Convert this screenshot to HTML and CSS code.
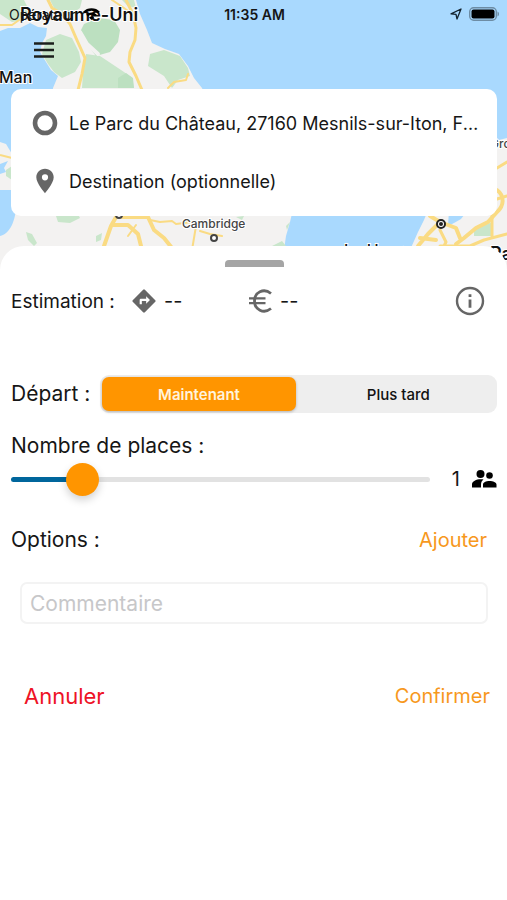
FILE: index.html
```html
<!DOCTYPE html>
<html lang="fr">
<head>
<meta charset="utf-8">
<meta name="viewport" content="width=device-width, initial-scale=1">
<title>Réservation</title>
<link rel="stylesheet" href="styles.css">
</head>
<body>
<div class="app">
  <svg class="map" viewBox="0 0 507 280" preserveAspectRatio="xMidYMin slice" aria-hidden="true">
    <rect width="507" height="280" fill="#a9d9fe"/>
    <path fill="#f3f2f1" d="M0 0H136L140 14 147 30 152 43 165 49 179 54 188 66 194 78 202 88 210 110 200 220H140L52 120 53 88 58 76 51 70 46 62 40 52 42 43 46 36 47 28 38 27 30 23 20 28 8 28 0 31Z"/>
    <path fill="#c9e6cb" d="M0 0H24L30 12 24 20 12 22 0 14ZM50 0H82L80 8 66 18 56 12ZM46 40 60 34 72 38 79 52 81 62 75 72 62 78 54 72 48 64 42 54ZM86 54 100 56 112 64 124 72 132 78 134 88H82L83 72ZM150 54 164 50 180 56 188 68 190 76 178 80 172 88 164 76 148 66ZM122 0H134L136 8 128 6Z"/>
    <path fill="#bce0c0" d="M84 24 98 18 114 20 120 30 118 42 110 52 96 56 88 46 80 32ZM118 78 126 73 133 78 134 88H118Z"/>
    <path fill="none" stroke="#f3f2f1" stroke-width="4" stroke-linecap="round" d="M80 32 87 44 98 54"/>
    <g fill="none" stroke="#fadb83" stroke-linecap="round" stroke-linejoin="round">
      <path stroke-width="3" d="M48 0 52 8 62 14 70 24 76 38 85 58 82 74 78 90M126 0 133 14 136 28 135 40 130 52 129 62 136 76 142 90"/>
      <path stroke-width="2" d="M112 0 124 8 132 14M0 25 12 25 22 18M188 74 186 80 174 82 168 88"/>
    </g>
    <path fill="#f3f2f1" d="M0 142 6 144 12 154V190H0Z"/>
    <path fill="#a9d9fe" d="M0 164 8 161 4 168 6 172 0 174Z"/>
    <path fill="#c9e6cb" d="M6 170 12 166V180L6 176Z"/>
    <path stroke="#fadb83" stroke-width="2" fill="none" d="M0 155 12 158"/>
    <path fill="#f3f2f1" d="M0 236C10 234 16 220 16 205H294L290 222 286 236 284 250 280 280H0Z"/>
    <path fill="#c9e6cb" d="M56 216 78 214 80 218 70 223 58 222ZM26 232 32 234 37 243 34 246 28 240ZM96 236 102 233 101 240 96 242ZM272 246 282 241 286 246ZM236 217 244 216 242 220ZM286 226 290 222 287 230Z"/>
    <g fill="none" stroke="#fadb83" stroke-linecap="round" stroke-linejoin="round">
      <path stroke-width="4" d="M120 210 111 226 104 246 100 260M112 225H128L138 234 142 250M122 217 148 217 154 230 164 238 172 248"/>
      <path stroke-width="2" d="M136 225 128 236M150 220 160 222 172 221 176 224 192 222M196 226 194 238 192 250M200 231 210 234 222 236"/>
    </g>
    <path fill="#f3f2f1" d="M507 138 499 140 492 146V205H430L424 220 418 232 410 250V280H507Z"/>
    <path fill="#a9d9fe" d="M449 210H468L461 219 454 223 448 226Z"/>
    <path fill="#c9e6cb" d="M474 230 492 222V236H474Z"/>
    <g fill="none" stroke="#fadb83" stroke-linecap="round" stroke-linejoin="round">
      <path stroke-width="4" d="M497 190C505 196 504 206 497 212L488 222 476 228 464 238 456 244M430 216 440 222 456 228 460 238M418 246 428 234 438 224M420 238 436 240"/>
      <path stroke-width="3" d="M497 168 507 162M440 230 446 242 442 250M497 199 507 196M440 246H470L484 240 507 234M492 216V236"/>
    </g>
    <g fill="#fff" stroke="#444" stroke-width="2">
      <circle cx="119" cy="215" r="3"/>
      <circle cx="214" cy="238" r="3"/>
      <circle cx="441" cy="224" r="4" stroke="#222"/>
    </g>
    <circle cx="441" cy="224" r="2" fill="#222"/>
    <g class="map-labels">
      <text class="country" x="20" y="21">Royaume-Uni</text>
      <text class="region" x="-1" y="83">Man</text>
      <text class="town" x="182" y="228">Cambridge</text>
      <text class="town" x="490" y="148">Gro</text>
      <text class="region" x="344" y="256">Le Havre</text>
      <text class="country" x="490" y="260">Paris</text>
    </g>
  </svg>

  <header class="top">
    <div class="status">
      <div class="carrier">
        <span>Opérateur</span>
        <svg width="17" height="13" viewBox="0 0 17 13" fill="none" stroke="#000" stroke-width="2.400" aria-hidden="true"><path d="M1 4.500C5 .5 12 .5 16 4.500M4 7.500C6.500 5 10.500 5 13 7.500"/><path d="M6 9.500 8.500 12 11 9.500C9.500 8 7.500 8 6 9.500Z" fill="#000" stroke="none"/></svg>
      </div>
      <time class="clock">11:35 AM</time>
      <div class="indicators">
        <svg width="12" height="12" viewBox="0 0 12 12" fill="none" stroke="#12222e" stroke-width="1.300" stroke-linejoin="round" aria-hidden="true"><path d="M1 5.800 11 1 7 11 6 6.300Z"/></svg>
        <svg width="31" height="14" viewBox="0 0 31 14" aria-hidden="true"><rect x=".7" y=".7" width="26.600" height="12.600" rx="4" fill="none" stroke="#6d8ca4" stroke-width="1.400"/><rect x="2.500" y="2.500" width="23" height="9" rx="2" fill="#000"/><path d="M28.500 4.500c2 .8 2 4.200 0 5Z" fill="#6d8ca4"/></svg>
      </div>
    </div>
    <button class="menu" type="button" aria-label="Menu">
      <svg width="20" height="16" viewBox="0 0 20 16" stroke="#1b1f1c" stroke-width="2.400" aria-hidden="true"><path d="M0 1.500H20M0 8H20M0 14.500H20"/></svg>
    </button>
  </header>

  <section class="trip">
    <button class="place" type="button">
      <svg width="26" height="26" viewBox="0 0 26 26" aria-hidden="true"><circle cx="13" cy="13" r="10" fill="none" stroke="#666" stroke-width="4.600"/></svg>
      <span>Le Parc du Château, 27160 Mesnils-sur-Iton, France</span>
    </button>
    <button class="place" type="button">
      <svg width="26" height="26" viewBox="0 0 26 26" aria-hidden="true"><path fill="#666" fill-rule="evenodd" d="M13 .8C8 .8 4.300 4.600 4.300 9.300 4.300 15.500 13 25.200 13 25.200S21.700 15.500 21.700 9.300C21.700 4.600 18 .8 13 .8ZM13 6.200a3.100 3.100 0 1 1 0 6.200 3.100 3.100 0 0 1 0-6.200Z"/></svg>
      <span>Destination (optionnelle)</span>
    </button>
  </section>

  <main class="sheet">
    <div class="handle"></div>
    <section class="estimate">
      <h2>Estimation :</h2>
      <div class="figure distance">
        <svg width="26" height="26" viewBox="0 0 24 24" aria-hidden="true"><path fill="#666" d="M22.400 11.200 12.800 1.600a1.100 1.100 0 0 0-1.600 0L1.600 11.200a1.100 1.100 0 0 0 0 1.600l9.600 9.600a1.100 1.100 0 0 0 1.600 0l9.600-9.600a1.100 1.100 0 0 0 0-1.600ZM14 14.500V12h-4v3H8v-4a1 1 0 0 1 1-1h5V7.500l3.500 3.500Z"/></svg>
        <span>--</span>
      </div>
      <div class="figure">
        <svg width="26" height="26" viewBox="0 0 26 26" fill="none" stroke="#666" stroke-width="2.800" aria-hidden="true"><path d="M24 5.500C16.500-.5 7.500 4.500 7.500 13S16.500 26.500 24 20.500"/><path stroke-width="2.200" d="M2 10.300H18.500M2 15.200H18.500"/></svg>
        <span>--</span>
      </div>
      <button class="info" type="button" aria-label="Informations">
        <svg width="30" height="30" viewBox="0 0 30 30" aria-hidden="true"><circle cx="15" cy="15" r="13" fill="none" stroke="#666" stroke-width="2.400"/><path fill="#666" d="M13.600 13.500h2.800v8.200h-2.800zM13.600 8.300h2.800v2.800h-2.800z"/></svg>
      </button>
    </section>

    <div class="departure" role="radiogroup" aria-labelledby="depart">
      <span class="label" id="depart">Départ :</span>
      <div class="segments">
        <label><input type="radio" name="depart" checked><span>Maintenant</span></label>
        <label><input type="radio" name="depart"><span>Plus tard</span></label>
      </div>
    </div>

    <section class="seats">
      <label class="label" for="places">Nombre de places :</label>
      <div class="seat-row">
        <input id="places" type="range" min="0" max="7" value="1">
        <output for="places">1</output>
        <svg width="26" height="26" viewBox="0 0 26 26" aria-hidden="true"><circle cx="9.500" cy="8" r="4"/><circle cx="18.500" cy="9.500" r="3.300"/><path d="M12.500 13.400C7 12.400 1 14.600 1 18.300V21.500H10V18.500C10 16 11 14.500 12.500 13.400ZM18.500 15C15 15 12 16.400 12 18.600V21.500H25.500V18.600C25.500 16.400 22 15 18.500 15Z"/></svg>
      </div>
    </section>

    <section class="options">
      <span class="label">Options :</span>
      <button class="link" type="button">Ajouter</button>
    </section>

    <input class="comment" type="text" placeholder="Commentaire" aria-label="Commentaire">

    <footer class="actions">
      <button class="cancel" type="button">Annuler</button>
      <button class="link" type="button">Confirmer</button>
    </footer>
  </main>
</div>
</body>
</html>
```
FILE: styles.css
```css
* {
  box-sizing: border-box;
}

body {
  margin: 0;
  background: #fff;
  color: #161616;
  font-family: Inter, "Liberation Sans", sans-serif;
}

button {
  padding: 0;
  border: 0;
  background: none;
  color: inherit;
  font: inherit;
  cursor: pointer;
}

svg {
  display: block;
  flex: none;
}

.app {
  position: relative;
  display: flex;
  flex-direction: column;
  min-height: 100vh;
  overflow: hidden;
}

.map {
  position: absolute;
  top: 0;
  left: 0;
  width: 100%;
  height: 280px;
}

.map-labels {
  fill: #111;
  stroke: #fff;
  stroke-width: 2px;
  paint-order: stroke;
}

.country {
  font-size: 18px;
  font-weight: 600;
}

.region {
  font-size: 16px;
  font-weight: 500;
}

.town {
  fill: #444;
  font-size: 12px;
  font-weight: 500;
}

.top,
.trip,
.sheet {
  position: relative;
}

.top {
  height: 89px;
}

.status {
  display: grid;
  grid-template-columns: 1fr auto 1fr;
  align-items: center;
  height: 28px;
  padding: 0 7px 0 9px;
  font-size: 14px;
}

.carrier,
.indicators {
  display: flex;
  align-items: center;
  gap: 7px;
}

.indicators {
  justify-content: flex-end;
}

.clock {
  font-weight: 600;
}

.menu {
  display: grid;
  place-items: center;
  width: 44px;
  height: 44px;
  margin-left: 22px;
}

.trip {
  display: grid;
  grid-template-rows: 58px 58px;
  margin: 0 10px 0 11px;
  padding: 5px 16px 6px 21px;
  border-radius: 10px;
  background: #fff;
}

.place {
  display: flex;
  align-items: center;
  gap: 11px;
  min-width: 0;
  font-size: 18px;
  text-align: left;
}

.place span {
  overflow: hidden;
  text-overflow: ellipsis;
  white-space: nowrap;
}

.sheet {
  flex: 1;
  margin-top: 30px;
  padding: 14px 10px 0 11px;
  border-radius: 24px 24px 0 0;
  background: #fff;
}

.handle {
  width: 59px;
  height: 7px;
  margin: 0 auto;
  border-radius: 4px 4px 0 0;
  background: #a5a5a5;
}

.estimate {
  display: flex;
  align-items: center;
  height: 68px;
}

.estimate h2 {
  width: 120px;
  margin: 0;
  font-size: 19px;
  font-weight: 400;
}

.figure {
  display: flex;
  align-items: center;
  gap: 7px;
  font-size: 20px;
}

.distance {
  width: 116px;
}

.info {
  margin: 0 12px 0 auto;
}

.label {
  font-size: 21px;
  line-height: 28px;
}

.departure {
  display: flex;
  align-items: center;
  gap: 10px;
  margin-top: 40px;
}

.segments {
  display: grid;
  flex: 1;
  grid-template-columns: 1fr 1fr;
  gap: 6px;
  height: 38px;
  padding: 2px;
  border-radius: 9px;
  background: #eee;
}

.segments label {
  position: relative;
  display: grid;
  cursor: pointer;
}

.segments input {
  position: absolute;
  inset: 0;
  margin: 0;
  opacity: 0;
}

.segments span {
  display: grid;
  place-items: center;
  border-radius: 7px;
  color: #111;
  font-size: 15px;
  font-weight: 500;
}

.segments input:checked + span {
  background: #ff9500;
  box-shadow: 0 1px 3px rgb(0 0 0 / 25%);
  color: #fff3dc;
  font-weight: 600;
}

.seats {
  margin-top: 19px;
}

.seats .label {
  display: block;
}

.seat-row {
  display: flex;
  align-items: center;
  height: 38px;
}

.seat-row input {
  flex: 1;
  min-width: 0;
  height: 34px;
  margin: 0;
  appearance: none;
  background: none;
}

.seat-row input::-webkit-slider-runnable-track {
  height: 5px;
  border-radius: 3px;
  background: linear-gradient(90deg, #00669c 17%, #e2e2e2 17%);
}

.seat-row input::-webkit-slider-thumb {
  width: 33px;
  height: 33px;
  margin-top: -14px;
  appearance: none;
  border-radius: 50%;
  background: #ff9500;
  box-shadow: 0 4px 8px rgb(0 0 0 / 18%);
}

.seat-row output {
  width: 41px;
  padding-right: 11px;
  font-size: 20px;
  text-align: right;
}

.options {
  display: flex;
  align-items: center;
  justify-content: space-between;
  margin-top: 28px;
  padding-right: 10px;
}

.link {
  color: #f7981d;
  font-size: 20px;
  line-height: 28px;
}

.comment {
  display: block;
  width: calc(100% - 18px);
  height: 42px;
  margin: 28px 9px 0;
  padding: 0 8px;
  border: 2px solid #f3f3f3;
  border-radius: 7px;
  background: #fff;
  color: inherit;
  font: inherit;
  font-size: 21px;
}

.comment::placeholder {
  color: #c7c7c9;
  opacity: 1;
}

.actions {
  display: flex;
  align-items: center;
  justify-content: space-between;
  margin-top: 58px;
  padding: 0 7px 0 13px;
}

.cancel {
  color: #ee1226;
  font-size: 22px;
  line-height: 28px;
}
```
